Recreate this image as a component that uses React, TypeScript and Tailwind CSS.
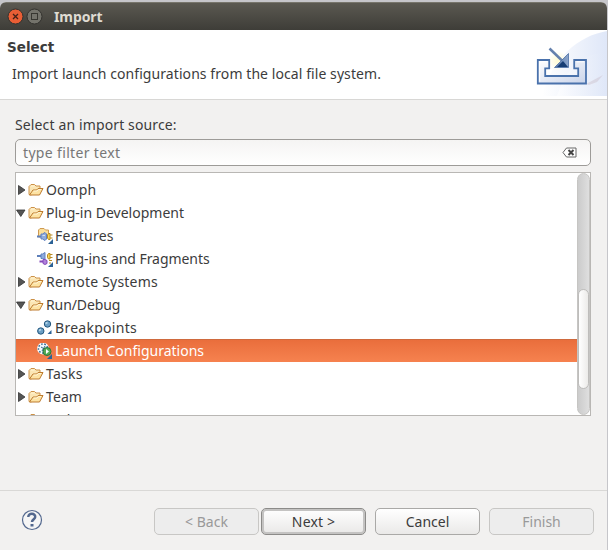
import React from 'react';

const Folder = () => (
  <svg width="16" height="14" viewBox="0 0 16 14" className="block shrink-0">
    <path d="M1 11.500V3.500L3 1.500h3.500L8 3h4v3.500L3 12z" fill="#fbe6b4" stroke="#cc9148" />
    <path d="M1.500 12L5 7h3.500l1.500-1.500h5L11.500 12z" fill="#fde3a4" stroke="#bd7b2e" strokeLinejoin="round" />
    <path d="M3 3h3.500M5.500 8h3.500l1.500-1.500h2.500" stroke="#fff5d7" fill="none" />
  </svg>
);

const Corner = () => <path d="M16 11v5h-5z" fill="#2c6296" />;

const Features = () => (
  <svg width="16" height="16" viewBox="0 0 16 16" className="block shrink-0">
    <path d="M1.500 9V2L3 .5h4L8.500 2h3v7z" fill="#fbdf9b" stroke="#cf9a52" />
    <path d="M0 8.500h4" stroke="#5d7fba" strokeWidth="2" />
    <path d="M4 6h1.500L8 4.500 9.500 6v5L8 12.500 5.500 11H4z" fill="#8fabdc" stroke="#5f80be" />
    <path d="M5.500 7.500H8" stroke="#d0def4" />
    <path d="M13 5.500h-1.500l-1 1.500v3l1 1.500H13zM13 7h2.500M13 10h2.500" fill="#f8d85b" stroke="#b98b22" />
    <Corner />
  </svg>
);

const Plugins = () => (
  <svg width="16" height="16" viewBox="0 0 16 16" className="block shrink-0">
    <path d="M0 5h4" stroke="#5d7fba" strokeWidth="2" />
    <path d="M4 3h1.500L8 1.500v7L5.500 7.500H4z" fill="#8fabdc" stroke="#5f80be" />
    <path d="M13 2.500h-1.500l-1 1.500v2.500l1 1.500H13zM13 3.500h2.500M13 6.500h2.500" fill="#f8d85b" stroke="#b98b22" />
    <path d="M2.500 10.500H6" stroke="#8449bb" strokeWidth="2" />
    <path d="M6 8.500h2l2 1v3L8 13.500 6 12.500z" fill="#b083da" stroke="#8449bb" />
    <path d="M12 9.500h3M12 12h2" stroke="#b98b22" />
    <Corner />
  </svg>
);

const Breakpoints = () => (
  <svg width="16" height="16" viewBox="0 0 16 16" className="block shrink-0">
    <circle cx="10.500" cy="4" r="3.200" fill="#6b9fc5" stroke="#23577e" />
    <circle cx="3.800" cy="11" r="3.200" fill="#6b9fc5" stroke="#23577e" />
    <path d="M8.500 3.500l2-1M2 10.500l2-1" stroke="#b9d8ea" strokeWidth="1.500" />
    <path d="M14.500 10v4h-4z" fill="#2c6296" />
  </svg>
);

const Launch = () => (
  <svg width="16" height="16" viewBox="0 0 16 16" className="block shrink-0">
    <circle cx="6" cy="5.500" r="4.900" fill="#d9ebf4" stroke="#fff" strokeWidth="2" />
    <circle cx="6" cy="5.500" r="4.600" fill="#eef7fc" stroke="#376b91" strokeWidth="1.500" strokeDasharray="1.600 1.600" />
    <path d="M4 4l5 3M8 3L5 8" stroke="#326987" />
    <circle cx="10" cy="8.500" r="4" fill="#55aa55" stroke="#28783d" />
    <path d="M9 6v5l3-2.500z" fill="#fff" />
    <path d="M15 11v5h-5z" fill="#2c6296" />
  </svg>
);

type RowProps = { label: string; text: string; icon?: React.ReactNode; open?: boolean; selected?: boolean };
const Row = ({ label, text, icon, open, selected }: RowProps) => (
  <div className={`flex h-[23px] shrink-0 items-center ${selected ? 'bg-linear-to-b from-[#e96d3b] to-[#f6824f] text-white inset-shadow-[0_1px_0_#cf6a3e]' : ''} ${icon ? 'pl-[21px]' : ''}`}>
    {!icon && (
      <svg width="12" height="12" viewBox="0 0 12 12" className="block shrink-0">
        <path d={open ? 'M.5 3h8.500L4.800 9.500z' : 'M2.500 1.500v9L9 6z'} fill="#555" stroke="#333" strokeWidth=".8" />
      </svg>
    )}
    {icon ?? <Folder />}
    <span className={`ml-[2px] whitespace-nowrap leading-[23px] ${text}`}>{label}</span>
  </div>
);

type ButtonProps = { label: string; look: string; text: string };
const Button = ({ label, look, text }: ButtonProps) => (
  <button className={`flex h-[27px] w-[105px] shrink-0 items-center justify-center rounded-[5px] border ${look}`}>
    <span className={`whitespace-nowrap ${text}`}>{label}</span>
  </button>
);

export default function App() {
  return (
    <div className="h-[550px] w-[608px] overflow-hidden bg-[#c6c6ca] pt-[2px] font-['Noto_Sans','Open_Sans',sans-serif] text-[14px] text-[#3c3c3c]">
      <div className="flex h-[548px] w-[607px] flex-col overflow-hidden rounded-t-[6px] bg-[#f2f1f0]">
        <header className="flex h-[28px] shrink-0 items-center border-t border-[#77756b] bg-linear-to-b from-[#5b5951] to-[#3e3d38] pl-[7px]">
          <svg width="36" height="18" viewBox="0 0 36 18" className="block">
            <circle cx="8.500" cy="8.500" r="7.500" fill="#e95e35" stroke="#33322e" />
            <path d="M6 6l5 5M11 6l-5 5" stroke="#452016" strokeWidth="1.300" />
            <circle cx="27.500" cy="8.500" r="7.500" fill="#74736b" stroke="#33322e" />
            <rect x="24.500" y="5.500" width="6" height="6" fill="none" stroke="#373630" />
          </svg>
          <span className="ml-[11px] text-[14px] font-bold tracking-[-0.1px] text-[#dfdbd2]">Import</span>
        </header>
        <section className="flex h-[69px] shrink-0 justify-between bg-white">
          <div className="whitespace-nowrap">
            <h1 className="mt-[7px] ml-[7px] font-['DejaVu_Sans',sans-serif] text-[13.500px] leading-[21px] font-bold">Select</h1>
            <p className="mt-[6px] ml-[12px] leading-[20px] tracking-[0.075px]">Import launch configurations from the local file system.</p>
          </div>
          <svg width="75" height="66" viewBox="0 0 75 66" className="block">
            <defs>
              <linearGradient id="sweep" x1="0" x2="1">
                <stop offset="0" stopColor="#fff" />
                <stop offset="1" stopColor="#dfe7f8" />
              </linearGradient>
              <linearGradient id="tray" x1="0" x2="1" y2="1">
                <stop stopColor="#fff" />
                <stop offset="1" stopColor="#cad4ea" />
              </linearGradient>
              <linearGradient id="head" x1="0" x2="1" y1="0" y2="0">
                <stop stopColor="#5577a9" />
                <stop offset="1" stopColor="#8ca5cb" />
              </linearGradient>
              <radialGradient id="glow">
                <stop stopColor="#fffbd2" />
                <stop offset="1" stopColor="#fffbd2" stopOpacity="0" />
              </radialGradient>
            </defs>
            <path d="M10 66C20 28 46 6 75 1v65z" fill="url(#sweep)" />
            <path d="M25 66C34 38 50 24 75 22v44z" fill="url(#sweep)" opacity=".6" />
            <path d="M54 54l17-9-6 7-8 3z" fill="#bda8b2" opacity=".3" />
            <circle cx="26" cy="31" r="10" fill="url(#glow)" />
            <path d="M5.800 30h11.400v8.300h-4V46h33v-7.700h-4V30H54v23.500H5.800z" fill="url(#tray)" stroke="#4a72ac" strokeWidth="1.800" />
            <path d="M7.700 51.500V31.800H15M44.500 31.800H52" stroke="#fff" fill="none" />
            <path d="M17.500 18.500L31 31.500" stroke="#6581ad" strokeWidth="2.500" />
            <path d="M36.500 23.500v14h-14z" fill="url(#head)" stroke="#4b6fa5" strokeWidth=".8" />
            <path d="M31 31l5 6H25z" fill="#173d73" />
          </svg>
        </section>
        <div className="h-px shrink-0 bg-[#d8d7d5]" />
        <main className="flex grow flex-col pl-[15px]">
          <label className="mt-[15px] leading-[20px] tracking-[0.13px]">Select an import source:</label>
          <div className="mt-[4px] flex h-[27px] w-[576px] items-center rounded-[5px] border border-[#9d9b98] bg-linear-to-b from-[#f5f4f3] to-white pl-[7px] text-[#777]">
            <span className="tracking-[0.34px]">type filter text</span>
            <svg width="15" height="11" viewBox="0 0 15 11" className="mr-[13px] ml-auto block">
              <path d="M4.500 1H14v9H4.500L1 5.500z" fill="#fff" stroke="#666" />
              <path d="M6.500 3l5 5M11.500 3l-5 5" stroke="#444" strokeWidth="2" />
            </svg>
          </div>
          <div className="mt-[6px] flex h-[244px] w-[576px] overflow-hidden border border-[#b9b7b4] bg-white">
            <div className="w-[561px] pt-[5px]">
              <Row label="Oomph" text="tracking-[0.1px]" />
              <Row label="Plug-in Development" text="" open />
              <Row label="Features" text="tracking-[0.25px]" icon={<Features />} />
              <Row label="Plug-ins and Fragments" text="tracking-[-0.06px]" icon={<Plugins />} />
              <Row label="Remote Systems" text="tracking-[0.2px]" />
              <Row label="Run/Debug" text="tracking-[-0.1px]" open />
              <Row label="Breakpoints" text="tracking-[0.28px]" icon={<Breakpoints />} />
              <Row label="Launch Configurations" text="" icon={<Launch />} selected />
              <Row label="Tasks" text="tracking-[0.25px]" />
              <Row label="Team" text="tracking-[0.1px]" />
              <Row label="Web" text="" />
            </div>
            <div className="flex w-[13px] flex-col rounded-full border border-[#c6c5c3] bg-linear-to-r from-[#cbcbcb] to-[#dfdfdf] pt-[115px]">
              <div className="h-[100px] rounded-full border border-[#bebdbb] bg-linear-to-r from-white to-[#ecebe9]" />
            </div>
          </div>
        </main>
        <footer className="flex h-[60px] shrink-0 border-t border-[#d9d8d6] pt-[17px] pl-[21px]">
          <svg width="22" height="22" viewBox="0 0 22 22" className="mt-[1px] block">
            <circle cx="11" cy="11" r="9.500" fill="#f5f5f5" stroke="#53688e" strokeWidth="1.200" />
            <path d="M7.300 8C7.300 3.500 14.700 4 14.200 8c0 2-3.200 2.500-3.200 5" fill="none" stroke="#53688e" strokeWidth="2.500" />
            <path d="M9.500 15h3v2.500h-3z" fill="#53688e" />
          </svg>
          <div className="ml-[111px] flex">
            <Button label="< Back" look="border-[#c8c7c5] bg-[#ededed] text-[#999]" text="" />
            <div className="ml-[2px]"><Button label="Next >" look="border-[#8c8b89] bg-linear-to-b from-white to-[#e9e8e7] inset-shadow-[0_0_0_2px_#c4c3c2]" text="tracking-[0.15px]" /></div>
            <div className="ml-[9px]"><Button label="Cancel" look="border-[#aaa9a7] bg-linear-to-b from-white to-[#eae9e8]" text="" /></div>
            <div className="ml-[9px]"><Button label="Finish" look="border-[#c8c7c5] bg-[#ededed] text-[#999]" text="" /></div>
          </div>
        </footer>
      </div>
    </div>
  );
}
